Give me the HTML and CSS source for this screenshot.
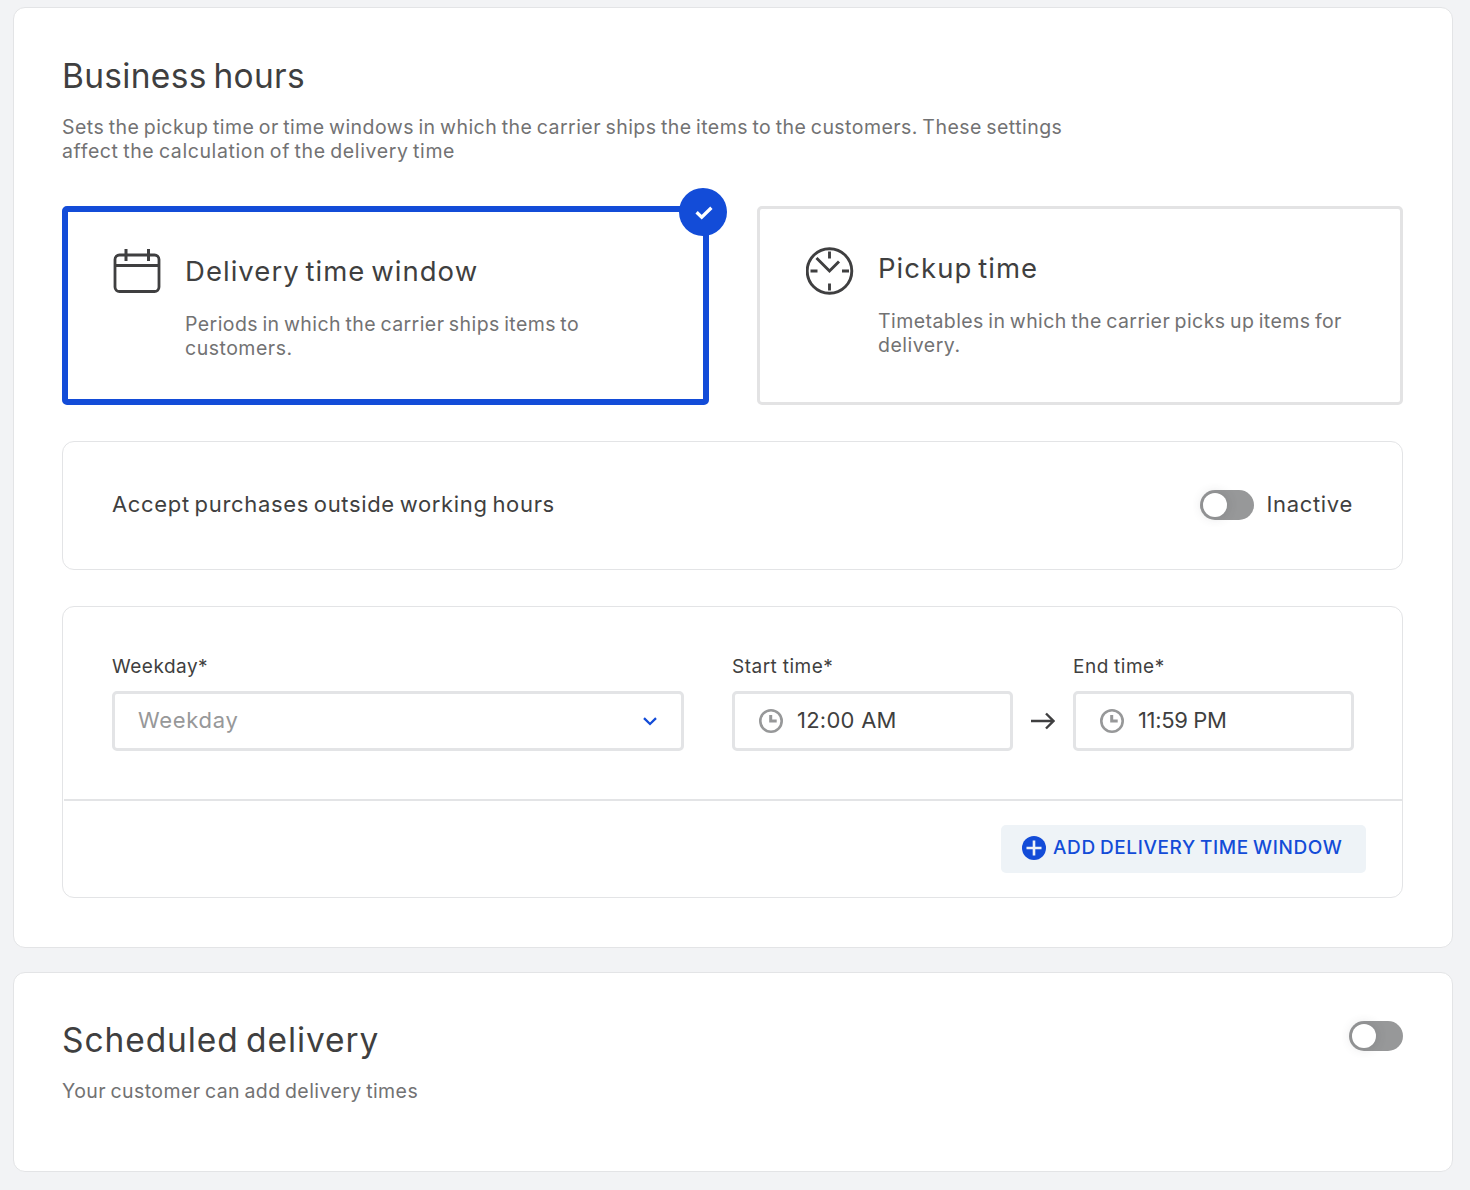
FILE: index.html
```html
<!DOCTYPE html>
<html lang="en">
<head>
<meta charset="utf-8">
<title>Business hours</title>
<link rel="stylesheet" href="styles.css">
</head>
<body>
<main class="page">
  <section class="card card-hours">
    <h1 class="title title-hours">Business hours</h1>
    <p class="lead">Sets the pickup time or time windows in which the carrier ships the items to the customers. These settings<br><span class="lead-end">affect the calculation of the delivery time</span></p>

    <div class="options">
      <div class="option option-selected">
        <svg class="option-icon" width="48" height="48" viewBox="0 0 48 48" fill="none" stroke="#3f3f40">
          <rect x="2" y="7" width="44" height="36.500" rx="4.500" stroke-width="2.800"/>
          <path d="M2 17.500H46" stroke-width="3"/>
          <path d="M13 1V13M35.500 1V13" stroke-width="3"/>
        </svg>
        <div class="option-body">
          <h2 class="option-title">Delivery time window</h2>
          <p class="option-text">Periods in which the carrier ships items to<br><span class="option-end">customers.</span></p>
        </div>
        <span class="badge">
          <svg width="18" height="14" viewBox="0 0 18 14" fill="none" stroke="#fff" stroke-width="3.300"><path d="M1.600 6.300L6.700 11.200L16.400 1.700"/></svg>
        </span>
      </div>
      <div class="option option-plain">
        <svg class="option-icon" width="48" height="48" viewBox="0 0 48 48" fill="none" stroke="#3f3f40" stroke-width="2.900">
          <circle cx="23.500" cy="24" r="22.300"/>
          <path d="M23.500 4.500V11.500M23.500 36.500V43.500M4.500 24H11.500M36 24H43"/>
          <path d="M10.500 11L23.500 24L33 14.500"/>
        </svg>
        <div class="option-body">
          <h2 class="option-title">Pickup time</h2>
          <p class="option-text">Timetables in which the carrier picks up items for<br><span class="option-end">delivery.</span></p>
        </div>
      </div>
    </div>

    <div class="panel panel-accept">
      <span class="accept">Accept purchases outside working hours</span>
      <div class="status"><span class="toggle"><i class="knob"></i></span><span class="inactive">Inactive</span></div>
    </div>

    <div class="panel panel-window">
      <div class="fields">
        <div class="field field-day">
          <span class="label">Weekday*</span>
          <div class="input">
            <span class="placeholder">Weekday</span>
            <svg class="chevron" width="14" height="9" viewBox="0 0 14 9" fill="none" stroke="#134cd8" stroke-width="2.300"><path d="M1 1.200L7 7L13 1.200"/></svg>
          </div>
        </div>
        <div class="field field-time">
          <span class="label">Start time*</span>
          <div class="input">
            <svg class="clock" width="24" height="24" viewBox="0 0 24 24" fill="none" stroke="#979899" stroke-width="2.600"><circle cx="12" cy="12" r="10.700"/><path d="M11.700 6V12H17.700" stroke-width="3"/></svg>
            <span class="time-start">12:00 AM</span>
          </div>
        </div>
        <svg class="arrow" width="24" height="18" viewBox="0 0 24 18" fill="none" stroke="#3f3f40" stroke-width="2.400"><path d="M0 9H22.500M15 1.500L22.500 9L15 16.500"/></svg>
        <div class="field field-time">
          <span class="label">End time*</span>
          <div class="input">
            <svg class="clock" width="24" height="24" viewBox="0 0 24 24" fill="none" stroke="#979899" stroke-width="2.600"><circle cx="12" cy="12" r="10.700"/><path d="M11.700 6V12H17.700" stroke-width="3"/></svg>
            <span class="time-end">11:59 PM</span>
          </div>
        </div>
      </div>
      <div class="actions">
        <button class="add" type="button">
          <svg width="24" height="24" viewBox="0 0 24 24"><circle cx="12" cy="12" r="12" fill="#134cd8"/><path d="M12 4.500V19.500M4.500 12H19.500" stroke="#eef3f7" stroke-width="2.600"/></svg>
          <span class="add-text">ADD DELIVERY TIME WINDOW</span>
        </button>
      </div>
    </div>
  </section>

  <section class="card card-scheduled">
    <div>
      <h1 class="title title-scheduled">Scheduled delivery</h1>
      <p class="lead lead-scheduled">Your customer can add delivery times</p>
    </div>
    <span class="toggle"><i class="knob"></i></span>
  </section>
</main>
</body>
</html>
```
FILE: styles.css
```css
* { box-sizing: border-box; }
body {
  margin: 0;
  background: #f2f3f5;
  color: #3f3f40;
  font-family: Inter, "Liberation Sans", sans-serif;
}
h1, h2, p { margin: 0; font-weight: 400; }
.page {
  display: flex;
  flex-direction: column;
  gap: 24px;
  width: 1440px;
  margin: 7px 0 0 13px;
}
.card {
  background: #fff;
  border: 1px solid #e3e4e6;
  border-radius: 12px;
  padding: 48px 49px 48px 48px;
}
.card-hours { height: 941px; }
.card-scheduled {
  display: flex;
  justify-content: space-between;
  align-items: flex-start;
  height: 200px;
  padding-top: 47px;
}
.card-scheduled .toggle { margin-top: 1px; }
.title {
  font-size: 33.5px;
  line-height: 40px;
  word-spacing: -3px;
  white-space: nowrap;
}
.title-hours { letter-spacing: 0.31px; }
.title-scheduled { letter-spacing: 0.92px; }
.lead, .option-text {
  color: #727273;
  font-size: 19.5px;
  line-height: 24px;
  letter-spacing: 0.43px;
  word-spacing: -1.5px;
  white-space: nowrap;
}
.lead { margin-top: 19px; letter-spacing: 0.46px; }
.lead-end { letter-spacing: 0.61px; }
.lead-scheduled { letter-spacing: 0.43px; }
.options {
  display: flex;
  justify-content: space-between;
  margin-top: 43px;
}
.option {
  position: relative;
  display: flex;
  height: 199px;
  border-radius: 5px;
}
.option-selected { width: 647px; border: 6px solid #134cd8; padding: 34px 0 0 45px; }
.option-plain { width: 646px; border: 3px solid #e3e3e4; padding: 38px 0 0 46px; }
.option-icon { flex: none; margin-right: 24px; }
.option-selected .option-icon { margin-top: 2px; }
.option-body { padding-top: 3px; }
.option-selected .option-body { padding-top: 7px; }
.option-title {
  font-size: 27.5px;
  line-height: 36px;
  letter-spacing: 1.04px;
  word-spacing: -3px;
  white-space: nowrap;
}
.option-text { margin-top: 23px; }
.option-end { letter-spacing: 0.5px; }
.badge {
  position: absolute;
  top: -24px;
  right: -24px;
  display: flex;
  align-items: center;
  justify-content: center;
  width: 48px;
  height: 48px;
  padding: 1px 0 0 1px;
  border-radius: 50%;
  background: #134cd8;
}
.panel { border: 1px solid #e3e4e6; border-radius: 12px; margin-top: 36px; }
.panel-accept {
  display: flex;
  align-items: center;
  justify-content: space-between;
  height: 129px;
  padding: 0 49px 2px;
  font-size: 22px;
}
.accept { padding-bottom: 2px; letter-spacing: 0.66px; word-spacing: -2px; }
.status { display: flex; align-items: center; gap: 12px; }
.inactive { padding-bottom: 2px; letter-spacing: 0.68px; }
.toggle {
  display: block;
  width: 54px;
  height: 30px;
  padding: 3px;
  border-radius: 15px;
  background: #979899;
}
.knob {
  display: block;
  width: 24px;
  height: 24px;
  border-radius: 50%;
  background: #fff;
  box-shadow: 0 0 12px rgba(61, 62, 64, 0.2);
}
.panel-window { height: 292px; }
.fields {
  display: flex;
  align-items: flex-end;
  height: 194px;
  margin-left: 1px;
  padding: 0 48px 48px;
  border-bottom: 2px solid #e3e4e6;
}
.label {
  display: block;
  margin-bottom: 12px;
  font-size: 19px;
  line-height: 24px;
  letter-spacing: 0.5px;
  word-spacing: -0.5px;
  white-space: nowrap;
}
.field-day { width: 572px; margin-right: 48px; }
.field-time { width: 281px; }
.input {
  display: flex;
  align-items: center;
  height: 60px;
  padding: 0 24px 2px 23px;
  border: 3px solid #e3e4e6;
  border-radius: 5px;
  font-size: 22px;
  white-space: nowrap;
}
.placeholder { color: #979899; letter-spacing: 0.7px; }
.chevron { margin: 2px 0 0 auto; }
.clock { margin: 2px 14px 0 1px; }
.time-start { letter-spacing: 0.25px; }
.time-end { letter-spacing: -0.35px; }
.arrow { margin: 0 18px 21px; }
.actions { display: flex; justify-content: flex-end; padding: 24px 36px 0 0; }
.add {
  display: flex;
  align-items: center;
  gap: 7px;
  width: 365px;
  height: 48px;
  padding: 0 0 2px 21px;
  border: 0;
  border-radius: 5px;
  background: #eef3f7;
  color: #134cd8;
  font: 500 19px Inter, "Liberation Sans", sans-serif;
  white-space: nowrap;
}
.add-text { padding-bottom: 2px; letter-spacing: 0.61px; word-spacing: -1.5px; }
```
